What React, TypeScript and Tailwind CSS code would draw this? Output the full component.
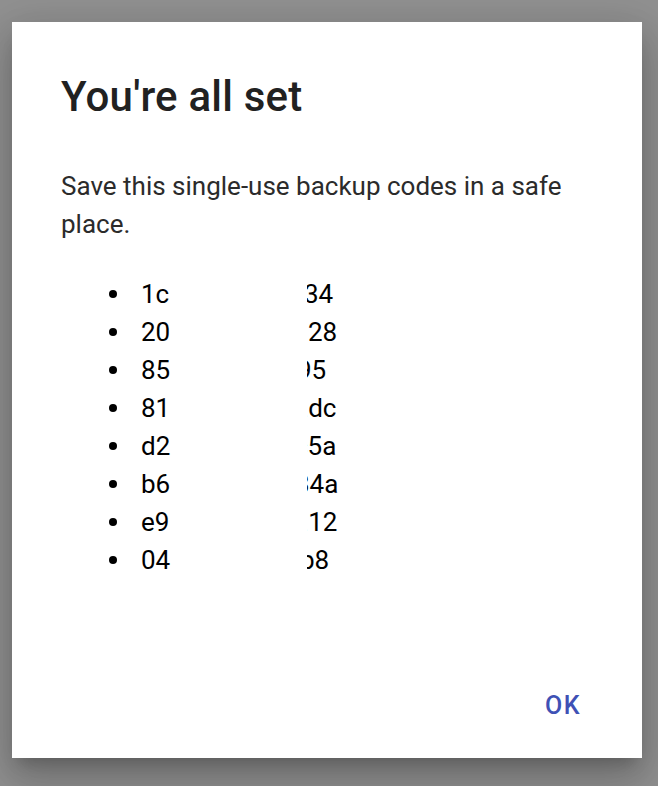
const CODES = [
  { head: "1c", tail: "34", shift: "-ml-[3px]" },
  { head: "20", tail: "28", shift: "ml-[1px]" },
  { head: "85", tail: "95", shift: "-ml-[10px]" },
  { head: "81", tail: "adc", shift: "-ml-[13px]" },
  { head: "d2", tail: "c5a", shift: "-ml-[13px]" },
  { head: "b6", tail: "34a", shift: "-ml-[12px]" },
  { head: "e9", tail: "a12", shift: "-ml-[13px]" },
  { head: "04", tail: "b8", shift: "-ml-[7px]" },
];

export default function App() {
  return (
    <div className="h-[786px] w-full overflow-hidden bg-[#919191] pl-[12px] pt-[22px] font-['Roboto',sans-serif]">
      <div className="flex h-[736px] w-[630px] flex-col bg-white px-[49px] pt-[51px] shadow-[0_11px_15px_-7px_rgba(0,0,0,0.2),0_24px_38px_3px_rgba(0,0,0,0.14),0_9px_46px_8px_rgba(0,0,0,0.12)]">
        <h2 className="text-[42px] leading-[48px] font-medium tracking-[0.005em] text-[#212121]">You're all set</h2>

        <p className="mt-[46px] text-[26px] leading-[38px] text-[#2b2b2b]">
          Save this single-use backup codes in a safe place.
        </p>

        <ul className="mt-[32px]">
          {CODES.map((c, i) => (
            <li key={i} className="flex h-[38px] items-center text-[26px] text-black">
              <span className="ml-[48px] h-[8px] w-[8px] shrink-0 rounded-full bg-black" />
              <span className="ml-[24px] w-[166px] shrink-0">{c.head}</span>
              <span className="w-[60px] overflow-hidden whitespace-nowrap">
                <span className={`inline-block ${c.shift}`}>{c.tail}</span>
              </span>
            </li>
          ))}
        </ul>

        <div className="mt-auto mb-[34px] flex justify-end">
          <button className="mr-[12px] text-[25px] leading-[36px] font-medium tracking-[0.06em] text-[#3f51b5]">OK</button>
        </div>
      </div>
    </div>
  );
}
